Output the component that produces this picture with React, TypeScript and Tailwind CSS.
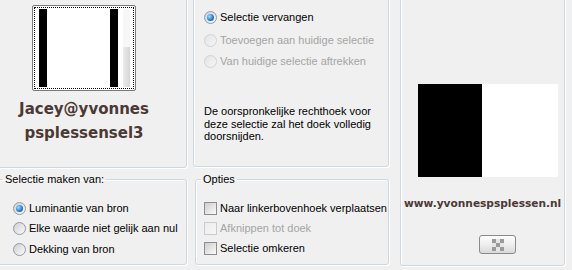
import React from "react";

const Radio = ({ checked, disabled }: { checked?: boolean; disabled?: boolean }) => (
  <span
    className={`flex w-[13px] h-[13px] shrink-0 items-center justify-center rounded-full border ${
      disabled
        ? "border-[#d2d2d2] bg-gradient-to-br from-[#e4e4e4] to-[#f6f6f6]"
        : "border-[#8f9ba6] bg-gradient-to-br from-[#cfcfcf] to-[#fbfbfb]"
    }`}
  >
    {checked && (
      <span className="w-[7px] h-[7px] rounded-full bg-[radial-gradient(circle_at_35%_35%,#a8dcff,#2a7fd0_55%,#14509a)]" />
    )}
  </span>
);

const Check = ({ disabled }: { disabled?: boolean }) => (
  <span
    className={`block w-[13px] h-[13px] shrink-0 border ${
      disabled
        ? "border-[#cbcbcb] bg-gradient-to-br from-[#ececec] to-[#f7f7f7]"
        : "border-[#8d8d8d] bg-gradient-to-br from-[#cdcdcd] to-[#fbfbfb]"
    }`}
  />
);

const Option = ({ children, disabled, control }: { children: React.ReactNode; disabled?: boolean; control: React.ReactNode }) => (
  <div className={`flex items-center gap-[3px] h-[13px] ${disabled ? "text-[#a4a4a4]" : "text-black"}`}>
    {control}
    <span className="leading-[13px]">{children}</span>
  </div>
);

const panel = "border border-[#cdd8e0] rounded-[3px] shadow-[inset_1px_1px_0_#fff,1px_1px_0_#fff]";

export default function App() {
  return (
    <div className="w-[572px] h-[270px] overflow-hidden bg-[#f0f0f0] font-['Liberation_Sans',Arial,sans-serif] text-[11px]">
      <div className="flex -mt-[4px]">
        {/* left column */}
        <div className="w-[191px] -ml-[4px] flex flex-col">
          <div className={`h-[172px] ${panel}`}>
            <div className="w-[174px] flex flex-col items-center">
              <div className="mt-[8px] w-[104px] h-[86px] rounded-[2px] border border-[#7a7a7a] bg-white p-[1px]">
                <div className="h-full border border-dotted border-black flex items-stretch py-[1px] pl-[4px]">
                  <div className="w-[8px] bg-black" />
                  <div className="w-[63px] bg-white" />
                  <div className="w-[8px] bg-black" />
                  <div className="w-[5px]" />
                  <div className="w-[7px] flex flex-col">
                    <div className="h-[37px] bg-[#f7f7f7]" />
                    <div className="flex-1 bg-gradient-to-r from-[#ececec] to-[#d6d6d6] border-t border-[#f8f8f8]" />
                  </div>
                </div>
              </div>
              <div className="mt-[6px] text-center font-['DejaVu_Sans',sans-serif] font-bold text-[15px] leading-[24px] text-[#4b3934]">
                <div>Jacey@yvonnes</div>
                <div>psplessensel3</div>
              </div>
            </div>
          </div>
          <fieldset className="mt-[5px] h-[92px] border border-[#cdd8e0] rounded-[3px] shadow-[inset_1px_1px_0_#fff,1px_1px_0_#fff] pl-[16px]">
            <legend className="-ml-[10px] px-[2px] leading-[13px]">Selectie maken van:</legend>
            <div className="flex flex-col gap-[7px] mt-[16px]">
              <Option control={<Radio checked />}>Luminantie van bron</Option>
              <Option control={<Radio />}>Elke waarde niet gelijk aan nul</Option>
              <div className="mt-[1px]">
                <Option control={<Radio />}>Dekking van bron</Option>
              </div>
            </div>
          </fieldset>
        </div>

        {/* middle column */}
        <div className="ml-[6px] w-[196px] flex flex-col">
          <div className={`h-[171px] ${panel} pl-[10px] pt-[14px]`}>
            <Option control={<Radio checked />}>Selectie vervangen</Option>
            <div className="mt-[10px]">
              <Option disabled control={<Radio disabled />}>Toevoegen aan huidige selectie</Option>
            </div>
            <div className="mt-[8px]">
              <Option disabled control={<Radio disabled />}>Van huidige selectie aftrekken</Option>
            </div>
            <p className="mt-[37px] leading-[12.5px] text-black">
              De oorspronkelijke rechthoek voor
              <br />
              deze selectie zal het doek volledig
              <br />
              doorsnijden.
            </p>
          </div>
          <fieldset className="mt-[6px] ml-[2px] w-[194px] h-[92px] border border-[#cdd8e0] rounded-[3px] shadow-[inset_1px_1px_0_#fff,1px_1px_0_#fff] pl-[8px]">
            <legend className="-ml-[3px] px-[2px] leading-[13px]">Opties</legend>
            <div className="flex flex-col gap-[7px] mt-[16px]">
              <Option control={<Check />}>Naar linkerbovenhoek verplaatsen</Option>
              <Option disabled control={<Check disabled />}>Afknippen tot doek</Option>
              <Option control={<Check />}>Selectie omkeren</Option>
            </div>
          </fieldset>
        </div>

        {/* right column */}
        <div className={`ml-[11px] w-[165px] h-[270px] ${panel} flex flex-col`}>
          <div className="mt-[87px] ml-[17px] flex w-[140px] h-[93px]">
            <div className="w-[64px] bg-black" />
            <div className="flex-1 bg-white" />
          </div>
          <div className="mt-[19px] ml-[3px] font-['DejaVu_Sans',sans-serif] font-bold text-[10.6px] leading-[14px] text-[#4b3934]">
            www.yvonnespsplessen.nl
          </div>
          <button className="mt-[25px] ml-[78px] w-[37px] h-[19px] rounded-[3px] border border-[#8a8a8a] bg-gradient-to-b from-[#fdfdfd] via-[#eeeeee] to-[#d9d9d9] flex items-center justify-center">
            <svg width="12" height="12" viewBox="0 0 12 12">
              <rect width="12" height="12" fill="#e6e6e6" />
              <rect x="0" y="0" width="4" height="4" fill="#9a9a9a" />
              <rect x="8" y="0" width="4" height="4" fill="#9a9a9a" />
              <rect x="4" y="4" width="4" height="4" fill="#9a9a9a" />
              <rect x="0" y="8" width="4" height="4" fill="#9a9a9a" />
              <rect x="8" y="8" width="4" height="4" fill="#9a9a9a" />
            </svg>
          </button>
        </div>
      </div>
    </div>
  );
}
